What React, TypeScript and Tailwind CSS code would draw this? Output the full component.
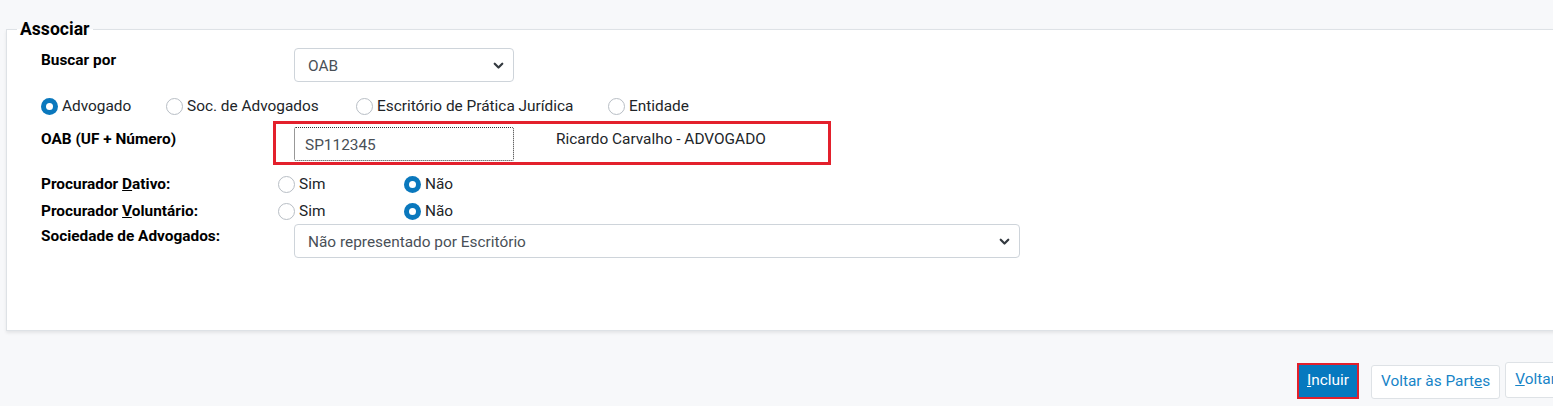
import React from "react";

function Radio({ checked, label }: { checked?: boolean; label: React.ReactNode }) {
  return (
    <label className="flex items-center gap-[4px] text-[15.4px] text-[#212529] leading-[20px] whitespace-nowrap">
      {checked ? (
        <span className="w-[17px] h-[17px] rounded-full bg-[#0a78bd] flex items-center justify-center shrink-0">
          <span className="w-[7px] h-[7px] rounded-full bg-white" />
        </span>
      ) : (
        <span className="w-[17px] h-[17px] rounded-full border border-[#b8bec5] bg-white shrink-0" />
      )}
      <span>{label}</span>
    </label>
  );
}

function Chevron() {
  return (
    <svg width="11" height="11" viewBox="0 0 16 16" className="text-[#343a40]">
      <path d="M2.5 5.5l5.5 5.5 5.5-5.5" fill="none" stroke="currentColor" strokeWidth="3.2" strokeLinecap="round" strokeLinejoin="round" />
    </svg>
  );
}

function Select({ value, width }: { value: string; width: string }) {
  return (
    <div className={`${width} h-[34px] bg-white border border-[#ced4da] rounded-[4px] flex items-center justify-between pl-[13px] pr-[9px] text-[15.4px] text-[#495057]`}>
      <span className="pt-[3px]">{value}</span>
      <Chevron />
    </div>
  );
}

export default function App() {
  return (
    <div className="w-[1553px] h-[406px] overflow-hidden bg-[#f7f8fa] font-['Roboto',sans-serif]">
      <fieldset className="ml-[6px] mt-[19px] w-[1600px] h-[312px] bg-white border border-[#dee2e6] shadow-[0_2px_3px_rgba(0,0,0,0.08)] pl-[10px]">
        <legend className="px-[3px] text-[17.6px] font-bold text-black leading-[20px]">Associar</legend>

        <div className="pl-[24px] pt-[9px] text-[15.4px] text-black">
          {/* Buscar por */}
          <div className="flex items-start h-[34px]">
            <div className="w-[253px] font-bold leading-[20px] pt-[2px]">Buscar por</div>
            <Select value="OAB" width="w-[220px]" />
          </div>

          {/* Tipo */}
          <div className="flex items-center mt-[14px] h-[20px]">
            <div className="w-[125px]"><Radio checked label="Advogado" /></div>
            <div className="w-[190px]"><Radio label="Soc. de Advogados" /></div>
            <div className="w-[252px]"><Radio label="Escritório de Prática Jurídica" /></div>
            <Radio label="Entidade" />
          </div>

          {/* OAB */}
          <div className="flex items-start mt-[5px]">
            <div className="w-[232px] font-bold leading-[20px] pt-[8px]">OAB (UF + Número)</div>
            <div className="w-[558px] h-[44px] border-[3px] border-[#e3202c] flex items-start pl-[18px] pt-[3px]">
              <div className="w-[220px] h-[34px] bg-white border border-dotted border-[#333] rounded-[2px] flex items-center pl-[10px] pt-[3px] text-[15.4px] text-[#495057]">
                SP112345
              </div>
              <div className="ml-[42px] mt-[2px] text-[15.4px] text-[#212529] leading-[20px]">Ricardo Carvalho - ADVOGADO</div>
            </div>
          </div>

          {/* Dativo */}
          <div className="flex items-center mt-[9px] h-[20px]">
            <div className="w-[237px] font-bold leading-[20px]">
              Procurador <span className="underline">D</span>ativo:
            </div>
            <div className="w-[126px]"><Radio label="Sim" /></div>
            <Radio checked label="Não" />
          </div>

          {/* Voluntario */}
          <div className="flex items-center mt-[7px] h-[20px]">
            <div className="w-[237px] font-bold leading-[20px]">
              Procurador <span className="underline">V</span>oluntário:
            </div>
            <div className="w-[126px]"><Radio label="Sim" /></div>
            <Radio checked label="Não" />
          </div>

          {/* Sociedade */}
          <div className="flex items-start mt-[3px]">
            <div className="w-[253px] font-bold leading-[20px] pt-[2px]">Sociedade de Advogados:</div>
            <Select value="Não representado por Escritório" width="w-[726px]" />
          </div>
        </div>
      </fieldset>

      <div className="flex items-start mt-[31px] pl-[1297px] gap-[12px] w-[1700px]">
        <div className="border-[2px] border-[#e3202c] mt-[1px] shrink-0">
          <button className="h-[32px] px-[8px] bg-[#0679bf] text-white text-[15.4px] whitespace-nowrap">
            <span className="underline">I</span>ncluir
          </button>
        </div>
        <button className="h-[34px] mt-[3px] px-[9px] bg-white border border-[#dee2e6] rounded-[3px] text-[15.4px] text-[#1784c7] whitespace-nowrap shrink-0">
          Voltar às Part<span className="underline">e</span>s
        </button>
        <button className="h-[36px] -ml-[7px] px-[9px] bg-white border border-[#dee2e6] rounded-[3px] text-[15.4px] text-[#1784c7] whitespace-nowrap shrink-0">
          <span className="underline">V</span>oltar
        </button>
      </div>
    </div>
  );
}
